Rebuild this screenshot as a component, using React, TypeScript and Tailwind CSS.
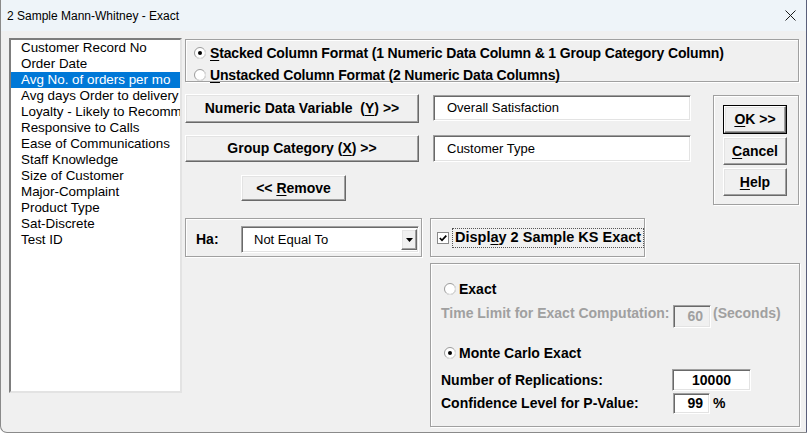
import React from "react";

const fields = [
  "Customer Record No",
  "Order Date",
  "Avg No. of orders per mo",
  "Avg days Order to delivery",
  "Loyalty - Likely to Recommend",
  "Responsive to Calls",
  "Ease of Communications",
  "Staff Knowledge",
  "Size of Customer",
  "Major-Complaint",
  "Product Type",
  "Sat-Discrete",
  "Test ID",
];

function Radio({ on }: { on?: boolean }) {
  return (
    <svg width="12" height="12" viewBox="0 0 12 12" className="shrink-0">
      <circle cx="6" cy="6" r="5.5" fill="#ffffff" stroke="#9a9a9a" />
      <path d="M2.1 9.9 A5.5 5.5 0 0 0 9.9 2.1" fill="none" stroke="#e6e6e6" />
      {on && <circle cx="6" cy="6" r="2" fill="#000000" />}
    </svg>
  );
}

function Check() {
  return (
    <svg width="12" height="12" viewBox="0 0 12 12" className="shrink-0">
      <rect x="0.5" y="0.5" width="11" height="11" fill="#ffffff" stroke="#8a8a8a" />
      <path d="M2.8 6 L5 8.3 L9.3 3.6" fill="none" stroke="#000000" strokeWidth="1.7" />
    </svg>
  );
}

const raised =
  "border border-t-white border-l-white border-r-[#696969] border-b-[#696969] bg-[#f0f0f0] shadow-[inset_-1px_-1px_0_#a0a0a0,inset_1px_1px_0_#e3e3e3]";
const sunken =
  "border border-t-[#a0a0a0] border-l-[#a0a0a0] border-r-white border-b-white shadow-[inset_1px_1px_0_#696969,inset_-1px_-1px_0_#e3e3e3]";
const etched = "border border-[#a0a0a0] shadow-[inset_1px_1px_0_#ffffff,1px_1px_0_#ffffff]";

export default function App() {
  return (
    <div className="w-[807px] h-[433px] overflow-hidden bg-[#f0f0f0] border-l border-b border-r border-[#8a8a8a] border-r-[#5a5f7a] rounded-bl-[7px] flex flex-col font-['Liberation_Sans',Arial,sans-serif] text-black select-none">
      {/* title bar */}
      <div className="h-[31px] shrink-0 bg-[#eef4f9] flex items-center justify-between pl-[6px] pr-[10px] text-[12px]">
        <span>2 Sample Mann-Whitney - Exact</span>
        <svg width="11" height="11" viewBox="0 0 11 11">
          <path d="M0.5 0.5 L10.5 10.5 M10.5 0.5 L0.5 10.5" stroke="#1a1a1a" strokeWidth="1" />
        </svg>
      </div>

      <div className="flex pt-[7px]">
        {/* variable list */}
        <div className="ml-[8px] w-[173px] h-[355px] bg-white border-2 border-t-[#7d7d7d] border-l-[#7d7d7d] border-r-[#e3e3e3] border-b-[#e3e3e3] overflow-hidden text-[13.4px]">
          {fields.map((f, i) => (
            <div
              key={f}
              className={
                "h-[16px] leading-[16px] pl-[10px] whitespace-nowrap " +
                (i === 2 ? "bg-[#0078d7] text-white" : "")
              }
            >
              {f}
            </div>
          ))}
        </div>

        {/* right side */}
        <div className="ml-[3px] mt-[1px] flex flex-col text-[14px] font-bold">
          <div className={"w-[614px] h-[43px] pt-[5px] pl-[8px] tracking-[-0.15px] " + etched}>
            <div className="h-[16px] flex items-center gap-[4px]">
              <Radio on />
              <span>
                <u className="underline-offset-2">S</u>tacked Column Format (1 Numeric Data Column &amp; 1 Group Category Column)
              </span>
            </div>
            <div className="h-[16px] mt-[6px] flex items-center gap-[4px]">
              <Radio />
              <span>
                <u className="underline-offset-2">U</u>nstacked Column Format (2 Numeric Data Columns)
              </span>
            </div>
          </div>

          <div className="flex mt-[12px]">
            <div className="w-[506px] flex flex-col">
              <div className="flex items-start gap-[14px]">
                <button className={"w-[234px] h-[29px] font-bold " + raised}>
                  Numeric Data Variable&nbsp; (<u className="underline-offset-2">Y</u>) &gt;&gt;
                </button>
                <div className={"mt-[1px] w-[258px] h-[26px] bg-white pl-[13px] flex items-center text-[13px] font-normal " + sunken}>
                  Overall Satisfaction
                </div>
              </div>
              <div className="flex items-start gap-[14px] mt-[12px]">
                <button className={"w-[234px] h-[27px] font-bold " + raised}>
                  Group Category (<u className="underline-offset-2">X</u>) &gt;&gt;
                </button>
                <div className={"w-[258px] h-[27px] bg-white pl-[13px] flex items-center text-[13px] font-normal " + sunken}>
                  Customer Type
                </div>
              </div>
              <button className={"ml-[56px] mt-[13px] w-[105px] h-[26px] font-bold " + raised}>
                &lt;&lt; <u className="underline-offset-2">R</u>emove
              </button>
            </div>

            <div className={"ml-[22px] mt-[1px] w-[86px] h-[110px] pt-[9px] pl-[9px] flex flex-col gap-[3px] " + etched}>
              <div className="w-[64px] h-[29px] border border-black">
                <button className={"w-full h-full font-bold " + raised}>
                  <u className="underline-offset-2">O</u>K &gt;&gt;
                </button>
              </div>
              <button className={"w-[64px] h-[28px] font-bold " + raised}>
                <u className="underline-offset-2">C</u>ancel
              </button>
              <button className={"w-[64px] h-[28px] font-bold " + raised}>
                <u className="underline-offset-2">H</u>elp
              </button>
            </div>
          </div>

          <div className="flex mt-[13px] gap-[8px]">
            <div className={"w-[237px] h-[39px] pt-[7px] pl-[10px] flex items-start " + etched}>
              <span className="w-[45px] h-[27px] flex items-center">Ha:</span>
              <div className={"w-[178px] h-[27px] bg-white flex items-center justify-between pl-[12px] pr-[1px] text-[13px] font-normal " + sunken}>
                <span>Not Equal To</span>
                <div className={"w-[16px] h-[21px] flex items-center justify-center " + raised}>
                  <svg width="7" height="4" viewBox="0 0 7 4">
                    <path d="M0 0 H7 L3.5 4 Z" fill="#000000" />
                  </svg>
                </div>
              </div>
            </div>
            <div className={"w-[215px] h-[39px] pl-[6px] flex items-center gap-[3px] " + etched}>
              <Check />
              <span className="h-[20px] px-[2px] flex items-center border border-dotted border-[#555555] text-[14.5px] whitespace-nowrap">
                Displ<u className="underline-offset-2">a</u>y 2 Sample KS Exact
              </span>
            </div>
          </div>

          <div className={"ml-[245px] mt-[6px] w-[370px] h-[164px] pl-[10px] " + etched}>
            <div className="h-[16px] mt-[17px] ml-[3px] flex items-center gap-[3px]">
              <Radio />
              <span>Exact</span>
            </div>
            <div className="h-[23px] mt-[8px] flex items-start">
              <span className="w-[232px] leading-[16px] text-[#a0a0a0] whitespace-nowrap">Time Limit for Exact Computation:</span>
              <div className={"w-[38px] h-[23px] bg-[#f0f0f0] flex items-center justify-end pr-[7px] text-[#a0a0a0] " + sunken}>60</div>
              <span className="ml-[2px] leading-[16px] text-[#a0a0a0]">(Seconds)</span>
            </div>
            <div className="h-[16px] mt-[17px] ml-[3px] flex items-center gap-[3px]">
              <Radio on />
              <span>Monte Carlo Exact</span>
            </div>
            <div className="h-[22px] mt-[8px] flex items-center">
              <span className="w-[231px]">Number of Replications:</span>
              <div className={"w-[79px] h-[22px] bg-white flex items-center justify-center " + sunken}>10000</div>
            </div>
            <div className="h-[21px] mt-[2px] flex items-center">
              <span className="w-[232px]">Confidence Level for P-Value:</span>
              <div className={"w-[37px] h-[21px] bg-white flex items-center justify-end pr-[6px] " + sunken}>99</div>
              <span className="ml-[3px]">%</span>
            </div>
          </div>
        </div>
      </div>
    </div>
  );
}
